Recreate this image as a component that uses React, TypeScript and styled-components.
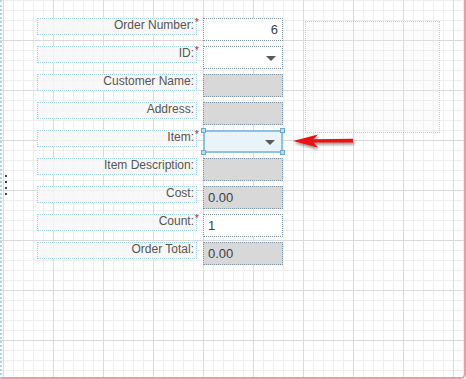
import styled, { createGlobalStyle } from 'styled-components';

const GlobalStyle = createGlobalStyle`
  html, body {
    margin: 0;
    padding: 0;
    background: #fff;
    font-family: Arial, 'Liberation Sans', sans-serif;
  }
`;

type Field = {
  label: string;
  required?: boolean;
  kind: 'text' | 'select' | 'readonly';
  value?: string;
  align?: 'left' | 'right';
  selected?: boolean;
};

const fields: Field[] = [
  { label: 'Order Number:', required: true, kind: 'text', value: '6', align: 'right' },
  { label: 'ID:', required: true, kind: 'select' },
  { label: 'Customer Name:', kind: 'readonly' },
  { label: 'Address:', kind: 'readonly' },
  { label: 'Item:', required: true, kind: 'select', selected: true },
  { label: 'Item Description:', kind: 'readonly' },
  { label: 'Cost:', kind: 'readonly', value: '0.00' },
  { label: 'Count:', required: true, kind: 'text', value: '1' },
  { label: 'Order Total:', kind: 'readonly', value: '0.00' },
];

const App = () => {
  return (
    <>
      <GlobalStyle />
      <Canvas>
        <DragHandle>
          <Dot />
          <Dot />
          <Dot />
          <Dot />
        </DragHandle>
        <Form>
          {fields.map((f) => (
            <Row key={f.label}>
              <LabelBox>
                {f.label}
                {f.required && <Star>*</Star>}
              </LabelBox>
              <Input $kind={f.kind} $align={f.align} $selected={f.selected}>
                {f.value}
                {f.kind === 'select' && <Caret />}
                {f.selected && (
                  <>
                    <Grip $top $left />
                    <Grip $top />
                    <Grip $left />
                    <Grip />
                  </>
                )}
              </Input>
            </Row>
          ))}
        </Form>
        <SidePanel />
        <Arrow width="66" height="18" viewBox="0 0 66 18">
          <path d="M2 8 L27 1.5 L22.5 6.3 L62 5.8 L62 9.6 L22.5 9.6 L27 14.5 Z" fill="#ee1111" />
        </Arrow>
      </Canvas>
    </>
  );
};

const Canvas = styled.div`
  position: relative;
  box-sizing: border-box;
  width: 466px;
  height: 379px;
  display: flex;
  align-items: flex-start;
  border-left: 2px dotted #a9d6ea;
  border-right: 2px solid #ec9e9e;
  border-bottom: 2px solid #ec9e9e;
  border-bottom-right-radius: 5px;
  background-color: #fff;
  background-image:
    linear-gradient(to right, #dadada 1px, transparent 1px),
    linear-gradient(to bottom, #dadada 1px, transparent 1px),
    linear-gradient(to right, #eeeeee 1px, transparent 1px),
    linear-gradient(to bottom, #eeeeee 1px, transparent 1px);
  background-size: 50px 50px, 50px 50px, 10px 10px, 10px 10px;
  background-position: 3px 0, 0 40px, 3px 0, 0 0;
  background-origin: border-box;
`;

const DragHandle = styled.div`
  display: flex;
  flex-direction: column;
  gap: 4px;
  margin: 175px 0 0 3px;
  width: 32px;
`;

const Dot = styled.span`
  width: 2px;
  height: 2px;
  background: #3a4656;
`;

const Form = styled.div`
  display: flex;
  flex-direction: column;
  gap: 5px;
  margin-top: 18px;
`;

const Row = styled.div`
  display: flex;
  align-items: flex-start;
  gap: 6px;
`;

const LabelBox = styled.div`
  position: relative;
  box-sizing: border-box;
  width: 160px;
  height: 17px;
  padding-right: 2px;
  border: 1px dotted #9fd0e4;
  background: rgba(246, 246, 246, 0.8);
  color: #555;
  font-size: 12px;
  line-height: 12px;
  text-align: right;
  white-space: nowrap;
`;

const Star = styled.span`
  position: absolute;
  right: -3px;
  top: -2px;
  color: #e8202a;
  font-size: 11px;
  line-height: 11px;
`;

const Input = styled.div<{
  $kind: 'text' | 'select' | 'readonly';
  $align?: 'left' | 'right';
  $selected?: boolean;
}>`
  position: relative;
  box-sizing: border-box;
  width: 80px;
  height: 23px;
  padding: 0 4px;
  display: flex;
  align-items: center;
  justify-content: ${({ $align }) => ($align === 'right' ? 'flex-end' : 'flex-start')};
  border: ${({ $selected }) => ($selected ? '2px solid #8cc2e2' : '1px dotted #7f95a6')};
  background: ${({ $kind, $selected }) =>
    $selected ? '#e9f3fa' : $kind === 'readonly' ? '#d8d8d8' : '#fff'};
  color: #3d3f4a;
  font-size: 13px;
`;

const Caret = styled.span`
  position: absolute;
  right: 6px;
  top: 50%;
  margin-top: -2px;
  width: 0;
  height: 0;
  border-left: 5px solid transparent;
  border-right: 5px solid transparent;
  border-top: 5px solid #595959;
`;

const Grip = styled.span<{ $top?: boolean; $left?: boolean }>`
  position: absolute;
  box-sizing: border-box;
  width: 5px;
  height: 5px;
  border: 1px solid #6ca8d2;
  background: #bcdcf0;
  ${({ $top }) => ($top ? 'top: -4px;' : 'bottom: -4px;')}
  ${({ $left }) => ($left ? 'left: -4px;' : 'right: -4px;')}
`;

const SidePanel = styled.div`
  box-sizing: border-box;
  width: 135px;
  height: 112px;
  margin: 21px 0 0 22px;
  border: 1px dotted #a9d3e6;
  background: rgba(240, 240, 240, 0.2);
`;

const Arrow = styled.svg`
  position: absolute;
  left: 289px;
  top: 133px;
  filter: drop-shadow(1px 2px 1.5px rgba(0, 0, 0, 0.45));
`;

export default App;
